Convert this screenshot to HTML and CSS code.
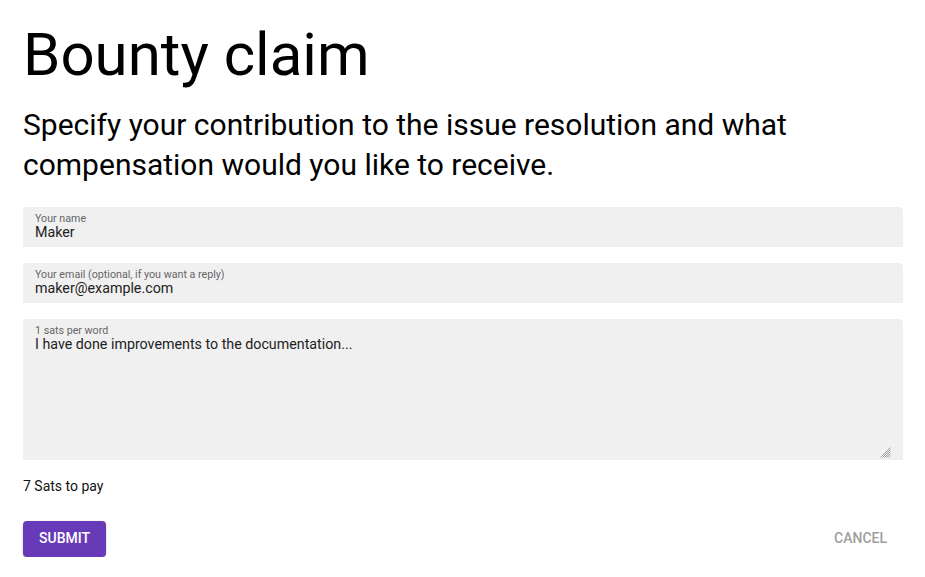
FILE: index.html
```html
<!DOCTYPE html>
<html>
<head>
<meta charset="utf-8">
<link rel="stylesheet" href="styles.css">
</head>
<body>
<main class="page">
  <h1 class="title">Bounty claim</h1>
  <p class="subtitle">Specify your contribution to the issue resolution and what compensation would you like to receive.</p>
  <form class="form">
    <label class="field">
      <span class="field-label">Your name</span>
      <input class="field-input" type="text" value="Maker">
    </label>
    <label class="field">
      <span class="field-label">Your email (optional, if you want a reply)</span>
      <input class="field-input" type="text" value="maker@example.com">
    </label>
    <label class="field field-area">
      <span class="field-label">1 sats per word</span>
      <textarea class="field-textarea">I have done improvements to the documentation...</textarea>
      <svg class="grip" width="11" height="11" viewBox="0 0 11 11" aria-hidden="true">
        <path d="M0.5 10.5 L10.5 0.5 M2.5 10.5 L10.5 2.5 M4.5 10.5 L10.5 4.5 M6.5 10.5 L10.5 6.5 M8.5 10.5 L10.5 8.5" stroke="#8a8a8a" stroke-width="0.8" fill="none"/>
      </svg>
    </label>
    <div class="total">7 Sats to pay</div>
    <div class="actions">
      <button type="button" class="btn btn-primary">Submit</button>
      <button type="button" class="btn btn-text">Cancel</button>
    </div>
  </form>
</main>
</body>
</html>
```
FILE: styles.css
```css
* { box-sizing: border-box; }
html, body { margin: 0; padding: 0; background: #fff; }
body { font-family: Roboto, "Noto Sans", "Liberation Sans", sans-serif; color: #000; }
.page { padding: 19px 22px 0 23px; }
.title { margin: 0 0 14px; font-size: 60px; font-weight: 400; line-height: 72px; color: #000; }
.subtitle { margin: 0 0 22px; font-size: 30px; line-height: 40px; font-weight: 400; color: #000; }
.form { display: flex; flex-direction: column; }
.field {
  display: flex; flex-direction: column;
  background: #f0f0f0;
  border-radius: 4px 4px 0 0;
  padding: 6px 12px 4px;
  height: 40px;
  margin-bottom: 16px;
}
.field-label { font-size: 10.7px; line-height: 11px; color: #666; }
.field-input {
  border: none; outline: none; background: transparent; padding: 0; margin: 0;
  font-family: inherit; font-size: 14.25px; line-height: 16px; height: 16px; color: #222;
}
.field-area { height: 141px; padding-bottom: 2px; position: relative; }
.field-textarea {
  flex: 1; border: none; outline: none; background: transparent; padding: 0; margin: 0;
  font-family: inherit; font-size: 14.25px; line-height: 16px; color: #222; resize: none;
}
.grip { position: absolute; right: 12px; bottom: 2px; }
.total { font-size: 14px; line-height: 20px; color: #111; margin-top: 0; margin-bottom: 25px; }
.actions { display: flex; justify-content: space-between; }
.btn {
  font-family: inherit; font-size: 14px; font-weight: 500; text-transform: uppercase;
  height: 36px; padding: 0 16px 2px; border: none; border-radius: 4px; cursor: pointer;
}
.btn-primary { background: #673ab7; color: #fff; box-shadow: 0 1px 3px rgba(0,0,0,0.2); }
.btn-text { background: transparent; color: #9e9e9e; }
```
